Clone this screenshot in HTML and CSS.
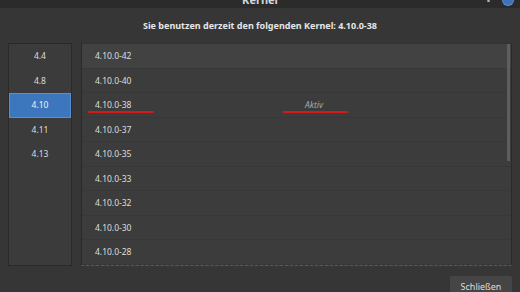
FILE: index.html
```html
<!DOCTYPE html>
<html lang="de">
<head>
    <meta charset="UTF-8">
    <title>Kernel</title>
    <link rel="stylesheet" href="styles.css">
</head>
<body>
    <div class="titlebar">
        <span class="title">Kernel</span>
        <span class="win_btn dot"></span>
        <span class="win_btn close"></span>
    </div>

    <div class="heading">Sie benutzen derzeit den folgenden Kernel: 4.10.0-38</div>

    <main class="panes">
        <ul class="versions">
            <li>4.4</li>
            <li>4.8</li>
            <li class="selected">4.10</li>
            <li>4.11</li>
            <li>4.13</li>
        </ul>

        <div class="kernels">
            <div class="row hover"><span class="name">4.10.0-42</span></div>
            <div class="row"><span class="name">4.10.0-40</span></div>
            <div class="row">
                <span class="name">4.10.0-38</span>
                <span class="status">Aktiv</span>
                <!-- red marks from the screenshot -->
                <span class="mark mark_name"></span>
                <span class="mark mark_status"></span>
            </div>
            <div class="row"><span class="name">4.10.0-37</span></div>
            <div class="row"><span class="name">4.10.0-35</span></div>
            <div class="row"><span class="name">4.10.0-33</span></div>
            <div class="row"><span class="name">4.10.0-32</span></div>
            <div class="row"><span class="name">4.10.0-30</span></div>
            <div class="row"><span class="name">4.10.0-28</span></div>
            <div class="scrollbar"></div>
        </div>
    </main>

    <div class="footer">
        <button class="close_btn">Schließen</button>
    </div>
</body>
</html>
```

FILE: styles.css
```css
html,
body {
    margin: 0;
    height: 100%;
    overflow: hidden;
}

body {
    background-color: #363636;
    font-family: "Noto Sans", "DejaVu Sans", sans-serif;
    color: #dedede;
}

.titlebar {
    position: relative;
    height: 8px;
    background-color: #2b2b2b;
    overflow: hidden;
    text-align: center;
}

.title {
    display: block;
    margin-top: -6px;
    font-size: 11px;
    font-weight: bold;
    line-height: 12px;
    color: #d8d8d8;
}

.win_btn {
    position: absolute;
    border-radius: 50%;
}

.dot {
    left: 487px;
    top: 0;
    width: 3px;
    height: 2px;
    background-color: #bbbbbb;
}

.close {
    left: 503px;
    top: -5px;
    width: 10px;
    height: 10px;
    background-color: #3f72b8;
    box-shadow: 0 0 0 1px #5a8cd0;
}

.heading {
    height: 35px;
    line-height: 35px;
    text-align: center;
    font-size: 9px;
    font-weight: bold;
    color: #e6e6e6;
}

.panes {
    display: flex;
    gap: 9px;
    height: 223px;
    padding: 0 8px;
}

.versions {
    width: 62px;
    margin: 0;
    padding: 0;
    list-style: none;
    background-color: #3b3b3b;
    border: 1px solid #2a2a2a;
}

.versions li {
    height: 24.5px;
    line-height: 24.5px;
    text-align: center;
    font-size: 8.5px;
}

.versions .selected {
    background-color: #3c76bd;
    box-shadow: inset 0 0 0 1px #5b8fd0;
    color: #f2f2f2;
}

.kernels {
    position: relative;
    flex: 1;
    background-color: #3c3c3c;
    border: 1px solid #2a2a2a;
    border-bottom: 1px dashed #5a5a5a;
    border-top-color: #333333;
}

.row {
    position: relative;
    display: flex;
    height: 24.5px;
    line-height: 24px;
    border-bottom: 1px solid #383838;
    box-sizing: border-box;
    font-size: 8.5px;
}

.row:last-of-type {
    border-bottom: none;
}

.row.hover {
    background-color: #424242;
}

.name {
    width: 210px;
    padding-left: 13px;
}

.status {
    font-style: italic;
    color: #a8a8a8;
}

.mark {
    position: absolute;
    top: 18px;
    height: 2px;
    border-radius: 1px;
    background-color: #d41a1a;
}

.mark_name {
    left: 6px;
    width: 66px;
}

.mark_status {
    left: 201px;
    width: 65px;
}

.scrollbar {
    position: absolute;
    top: 0;
    right: 1px;
    width: 3px;
    height: 117px;
    background-color: #5e5e5e;
}

.footer {
    display: flex;
    justify-content: flex-end;
    padding: 10px 8px 0 0;
}

.close_btn {
    width: 62px;
    height: 22px;
    border: none;
    border-radius: 2px;
    background-color: #454545;
    color: #dedede;
    font-family: "Noto Sans", "DejaVu Sans", sans-serif;
    font-size: 9px;
    padding: 0 0 2px 0;
}
```
